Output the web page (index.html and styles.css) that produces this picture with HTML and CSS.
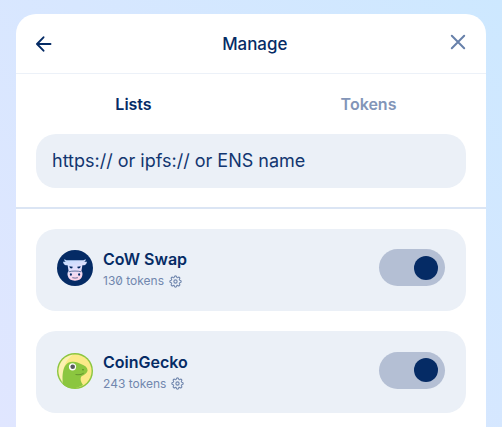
FILE: index.html
```html
<!DOCTYPE html>
<html lang="en">
<head>
<meta charset="utf-8">
<title>Manage</title>
<link rel="stylesheet" href="styles.css">
</head>
<body>
<svg class="defs" width="0" height="0" aria-hidden="true">
  <symbol id="gear" viewBox="0 0 24 24"><circle cx="12" cy="12" r="3"/><path d="M12 1.500c1.700 0 2 1 2.300 2.600.2.800 1.100 1.200 1.900.7 1.300-.9 2.200-1.200 3.300-.2 1 1.100.7 2-.2 3.300-.5.800-.1 1.700.7 1.900 1.600.3 2.500.6 2.500 2.200s-1 2-2.500 2.300c-.8.200-1.200 1.100-.7 1.900.9 1.300 1.200 2.200.2 3.300-1.100 1-2 .7-3.300-.2-.8-.5-1.700-.1-1.900.7-.3 1.600-.6 2.500-2.300 2.500s-2-1-2.300-2.500c-.2-.8-1.100-1.200-1.900-.7-1.300.9-2.200 1.200-3.300.2-1-1.100-.7-2 .2-3.300.5-.8.1-1.700-.7-1.900-1.600-.3-2.500-.6-2.500-2.300s1-1.900 2.500-2.200c.8-.2 1.200-1.100.7-1.900-.9-1.300-1.200-2.200-.2-3.300 1.100-1 2-.7 3.300.2.800.5 1.700.1 1.900-.7.300-1.600.6-2.600 2.300-2.600z"/></symbol>
</svg>
<main class="modal">
  <header class="header">
    <svg class="back" viewBox="0 0 16 16"><path d="M7.500 1.300 1 8l6.500 6.700M1.200 8h13.300"/></svg>
    <h1 class="title">Manage</h1>
    <svg class="close" viewBox="0 0 16 16"><path d="M1.800 1.800l12.400 12.400M14.200 1.800L1.800 14.200"/></svg>
  </header>
  <nav class="tabs"><span class="tab active">Lists</span><span class="tab">Tokens</span></nav>
  <div class="search">https:// or ipfs:// or ENS name</div>
  <section class="lists">
    <article class="item">
      <svg class="logo" viewBox="0 0 36 36">
        <defs><linearGradient id="cow" x1="0" y1="0" x2=".3" y2="1"><stop offset="0" stop-color="#bfdcff"/><stop offset=".55" stop-color="#e2e0fc"/><stop offset="1" stop-color="#ffd5e8"/></linearGradient></defs>
        <circle cx="18" cy="18" r="18" fill="#052b65"/>
        <path fill="url(#cow)" d="M7.500 9c-.4 1.600.2 2.600 2 2.700H6c.3 2.500 2 3.700 4.600 3.600l1 5.700c-1.200 1.200-1.400 3-.8 5.100.8 2.900 3 4.600 7.200 4.600s6.400-1.700 7.200-4.600c.6-2.100.4-3.900-.8-5.100l1-5.700c2.600.1 4.300-1.100 4.600-3.600h-3.500c1.800-.1 2.400-1.100 2-2.700-.7 1-1.700 1.300-3.200 1.300H10.700c-1.500 0-2.500-.3-3.200-1.300z"/>
        <path fill="#052b65" d="M12.300 16.300l3.500.5-.6 1.500c-1.300.4-2.500-.1-2.900-2zM23.700 16.300l-3.500.5.6 1.500c1.300.4 2.500-.1 2.900-2z"/>
        <path fill="none" stroke="#052b65" stroke-width=".6" d="M11.800 21.800c2.200-1 10.200-1 12.400 0"/>
        <g fill="#052b65"><ellipse cx="13.900" cy="24.500" rx="1" ry="1.300"/><ellipse cx="22.100" cy="24.500" rx="1" ry="1.300"/></g>
        <path fill="none" stroke="#052b65" stroke-width=".6" d="M15.300 27.700q2.800.8 5.600 0"/>
      </svg>
      <div class="info"><h2 class="name">CoW Swap</h2><p class="meta">130 tokens <svg class="gear"><use href="#gear"/></svg></p></div>
      <div class="toggle"><i class="knob"></i></div>
    </article>
    <article class="item">
      <svg class="logo" viewBox="0 0 36 36">
        <circle cx="18" cy="18" r="18" fill="#8bc63f"/>
        <circle cx="18" cy="18" r="16.600" fill="#fbea88"/>
        <path fill="#fff" d="M16 1.500C6 3 0 12 2 22c2 7 4 9 5 9-1-9-3-20 9-29.500z" opacity=".35"/>
        <path fill="#8bc63f" d="M6 31.500C4.800 24 5.800 15.500 8.800 12c2-2.600 4.500-3.500 7.600-3.200 3 .1 5.300 1.100 7.500 2.200 4 1.400 6.500 3.300 6.700 6.300-.3 3.100-3.200 4.500-6.300 6.100-1.500 2.600-.4 5.600 1.700 8.600-5.800 4-15 4.400-20-.5z"/>
        <circle cx="15.500" cy="13.800" r="3.600" fill="#fff"/><circle cx="15.700" cy="13.800" r="2.300" fill="#57595f"/>
        <circle cx="26" cy="16.700" r=".7" fill="#51791e"/>
        <path fill="none" stroke="#587f2a" stroke-width=".7" d="M18.500 21.500c3.500.6 6 .1 8.200-1.300"/>
      </svg>
      <div class="info"><h2 class="name">CoinGecko</h2><p class="meta">243 tokens <svg class="gear"><use href="#gear"/></svg></p></div>
      <div class="toggle"><i class="knob"></i></div>
    </article>
  </section>
</main>
</body>
</html>
```
FILE: styles.css
```css
* { box-sizing: border-box; }
html { overflow: hidden; }
body {
  margin: 0;
  height: 427px;
  padding: 14px 16px 0;
  overflow: hidden;
  background: linear-gradient(50deg, #e0e6ff 0%, #d7e7ff 50%, #cde8ff 100%);
  font-family: Inter, "Liberation Sans", sans-serif;
  color: #052b65;
}
h1, h2, p { margin: 0; }
.defs { display: none; }
.modal { height: 413px; background: #fff; border-radius: 20px 20px 0 0; }
.header {
  height: 60px;
  padding: 0 20px 0 19.500px;
  display: grid;
  grid-template-columns: 16px 1fr 16px;
  align-items: center;
  border-bottom: 1px solid #ecf1f8;
}
.back, .close { width: 16px; height: 16px; fill: none; stroke: #052b65; stroke-width: 1.9; stroke-linecap: round; stroke-linejoin: round; }
.close { stroke: #6780aa; stroke-width: 2; margin-bottom: 3px; }
.title { font-size: 16.900px; font-weight: 550; line-height: 24px; text-align: center; padding-left: 8px; }
.tabs { height: 60px; display: grid; grid-template-columns: 1fr 1fr; align-items: center; text-align: center; }
.tab { font-size: 16px; font-weight: 600; color: #8295b8; }
.tab.active { color: #052b65; }
.search {
  height: 53.500px;
  margin: 0 20px 19.500px;
  padding: 0 16px;
  border-radius: 20px;
  background: #ebf0f7;
  font-size: 18px;
  line-height: 54px;
  color: #123670;
}
.lists { padding: 19.500px 20px 0; border-top: 2px solid #dbe5f4; display: flex; flex-direction: column; gap: 20.500px; }
.item { height: 82px; padding: 0 21px 4px; display: flex; align-items: center; border-radius: 20px; background: #ebf0f7; }
.logo { width: 36px; height: 36px; margin: 1px 10px 0 0; flex: none; }
.info { flex: 1; padding-top: 5px; }
.name { font-size: 16px; font-weight: 600; line-height: 22px; }
.meta { display: flex; align-items: center; gap: 5px; font-size: 12px; line-height: 22px; color: #7187ae; font-feature-settings: "zero"; }
.gear { width: 13px; height: 13px; fill: none; stroke: #7187ae; stroke-width: 2.100; }
.toggle { width: 66px; height: 37px; padding-right: 7px; display: flex; align-items: center; justify-content: flex-end; border-radius: 19px; background: #b4bfd4; }
.knob { width: 24px; height: 24px; border-radius: 50%; background: #052b65; }
```
